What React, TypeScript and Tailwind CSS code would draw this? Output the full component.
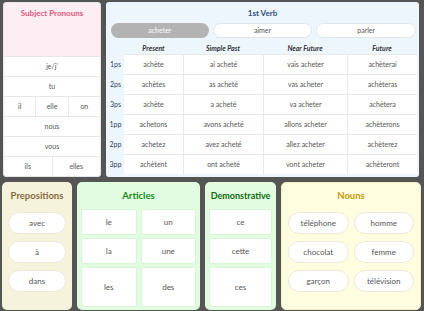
import React from 'react';

const pronounRows: string[][] = [['je/j\''], ['tu'], ['il', 'elle', 'on'], ['nous'], ['vous'], ['ils', 'elles']];

const verbs = ['acheter', 'aimer', 'parler'];
const tenses = ['Present', 'Simple Past', 'Near Future', 'Future'];
const conj: [string, string[]][] = [
  ['1ps', ['achète', 'ai acheté', 'vais acheter', 'achèterai']],
  ['2ps', ['achètes', 'as acheté', 'vas acheter', 'achèteras']],
  ['3ps', ['achète', 'a acheté', 'va acheter', 'achètera']],
  ['1pp', ['achetons', 'avons acheté', 'allons acheter', 'achèterons']],
  ['2pp', ['achetez', 'avez acheté', 'allez acheter', 'achèterez']],
  ['3pp', ['achètent', 'ont acheté', 'vont acheter', 'achèteront']],
];

function Pill({ children }: { children: React.ReactNode }) {
  return (
    <div className="h-[22px] flex items-center justify-center rounded-full bg-white border border-[#ece9d8] text-[8px] text-[#555]">
      {children}
    </div>
  );
}

function Cell({ children, grow }: { children: React.ReactNode; grow?: boolean }) {
  return (
    <div
      className={`flex items-center justify-center bg-white rounded-[2px] border border-[#d8f5d8] text-[8px] text-[#555] ${
        grow ? 'h-[40px]' : 'h-[26px]'
      }`}
    >
      {children}
    </div>
  );
}

export default function App() {
  return (
    <div
      className="w-[424px] h-[311px] bg-[#555555] pt-[2px] px-[2px] overflow-hidden"
      style={{ fontFamily: 'Lato, "Open Sans", sans-serif' }}
    >
      {/* Top row */}
      <div className="flex gap-[5px] h-[175px] ml-[1px]">
        {/* Subject pronouns */}
        <div className="w-[98px] rounded-[3px] bg-white border border-[#e8e8e8] flex flex-col overflow-hidden">
          <div className="h-[53px] bg-[#fdeef3] flex justify-center pt-[5px]">
            <span className="text-[8px] leading-[10px] font-bold text-[#e0577c]">Subject Pronouns</span>
          </div>
          {pronounRows.map((row, i) => (
            <div key={i} className="h-[20px] flex border-t border-[#e6e6e6]">
              {row.map((p, j) => (
                <div
                  key={p}
                  className={`flex-1 flex items-center justify-center text-[7px] text-[#555] ${
                    j > 0 ? 'border-l border-[#e6e6e6]' : ''
                  }`}
                >
                  {p}
                </div>
              ))}
            </div>
          ))}
        </div>

        {/* 1st Verb */}
        <div className="w-[313px] rounded-[3px] bg-[#eef6fd] flex flex-col">
          <div className="text-center text-[8px] font-bold text-[#2b4c7e] pt-[6px] leading-[10px]">1st Verb</div>
          <div className="flex gap-[4px] pl-[5px] pr-[3px] mt-[5px]">
            {verbs.map((v, i) => (
              <div
                key={v}
                className={`flex-1 h-[15px] rounded-full flex items-center justify-center text-[7px] ${
                  i === 0 ? 'bg-[#b3b3b3] text-white' : 'bg-white border border-[#dde6ee] text-[#555]'
                }`}
              >
                {v}
              </div>
            ))}
          </div>
          <div className="grid grid-cols-[17px_59px_80px_84px_70px] mt-[4px] ml-[1px]">
            <div className="h-[12px]" />
            {tenses.map((t) => (
              <div key={t} className="h-[12px] flex items-center justify-center text-[7px] font-bold italic text-[#333]">
                {t}
              </div>
            ))}
            {conj.map(([label, forms]) => (
              <React.Fragment key={label}>
                <div className="h-[20px] flex items-center justify-center text-[7px] text-[#2b3f5e]">{label}</div>
                {forms.map((f, j) => (
                  <div
                    key={j}
                    className={`h-[20px] bg-white border-t border-[#e8e8e8] flex items-center justify-center text-[7px] text-[#555] ${
                      j > 0 ? 'border-l' : ''
                    }`}
                  >
                    {f}
                  </div>
                ))}
              </React.Fragment>
            ))}
          </div>
        </div>
      </div>

      {/* Bottom row */}
      <div className="flex gap-[5px] mt-[5px] h-[128px]">
        {/* Prepositions */}
        <div className="w-[70px] rounded-[5px] bg-[#f5f3dc] flex flex-col px-[6px]">
          <div className="text-center text-[9.5px] font-bold text-[#8a6a3c] pt-[8px] leading-[12px]">Prepositions</div>
          <div className="flex flex-col gap-[7px] mt-[10px]">
            <Pill>avec</Pill>
            <Pill>à</Pill>
            <Pill>dans</Pill>
          </div>
        </div>

        {/* Articles */}
        <div className="w-[123px] rounded-[5px] bg-[#e2fce2] flex flex-col px-[4px]">
          <div className="text-center text-[9.5px] font-bold text-[#178a17] pt-[8px] leading-[12px]">Articles</div>
          <div className="grid grid-cols-2 gap-[3px] gap-x-[4px] mt-[7px]">
            <Cell>le</Cell>
            <Cell>un</Cell>
            <Cell>la</Cell>
            <Cell>une</Cell>
            <Cell grow>les</Cell>
            <Cell grow>des</Cell>
          </div>
        </div>

        {/* Demonstrative */}
        <div className="w-[71px] rounded-[5px] bg-[#e2fce2] flex flex-col px-[4px]">
          <div className="text-center text-[9px] font-bold text-[#0b6a0b] pt-[8px] leading-[12px] whitespace-nowrap">Demonstrative</div>
          <div className="flex flex-col gap-[3px] mt-[7px]">
            <Cell>ce</Cell>
            <Cell>cette</Cell>
            <Cell grow>ces</Cell>
          </div>
        </div>

        {/* Nouns */}
        <div className="w-[140px] rounded-[5px] bg-[#fffde0] border border-[#f3efc4] flex flex-col px-[6px]">
          <div className="text-center text-[9.5px] font-bold text-[#c49a00] pt-[7px] leading-[12px]">Nouns</div>
          <div className="grid grid-cols-2 gap-x-[5px] gap-y-[7px] mt-[10px]">
            <Pill>téléphone</Pill>
            <Pill>homme</Pill>
            <Pill>chocolat</Pill>
            <Pill>femme</Pill>
            <Pill>garçon</Pill>
            <Pill>télévision</Pill>
          </div>
        </div>
      </div>
    </div>
  );
}
